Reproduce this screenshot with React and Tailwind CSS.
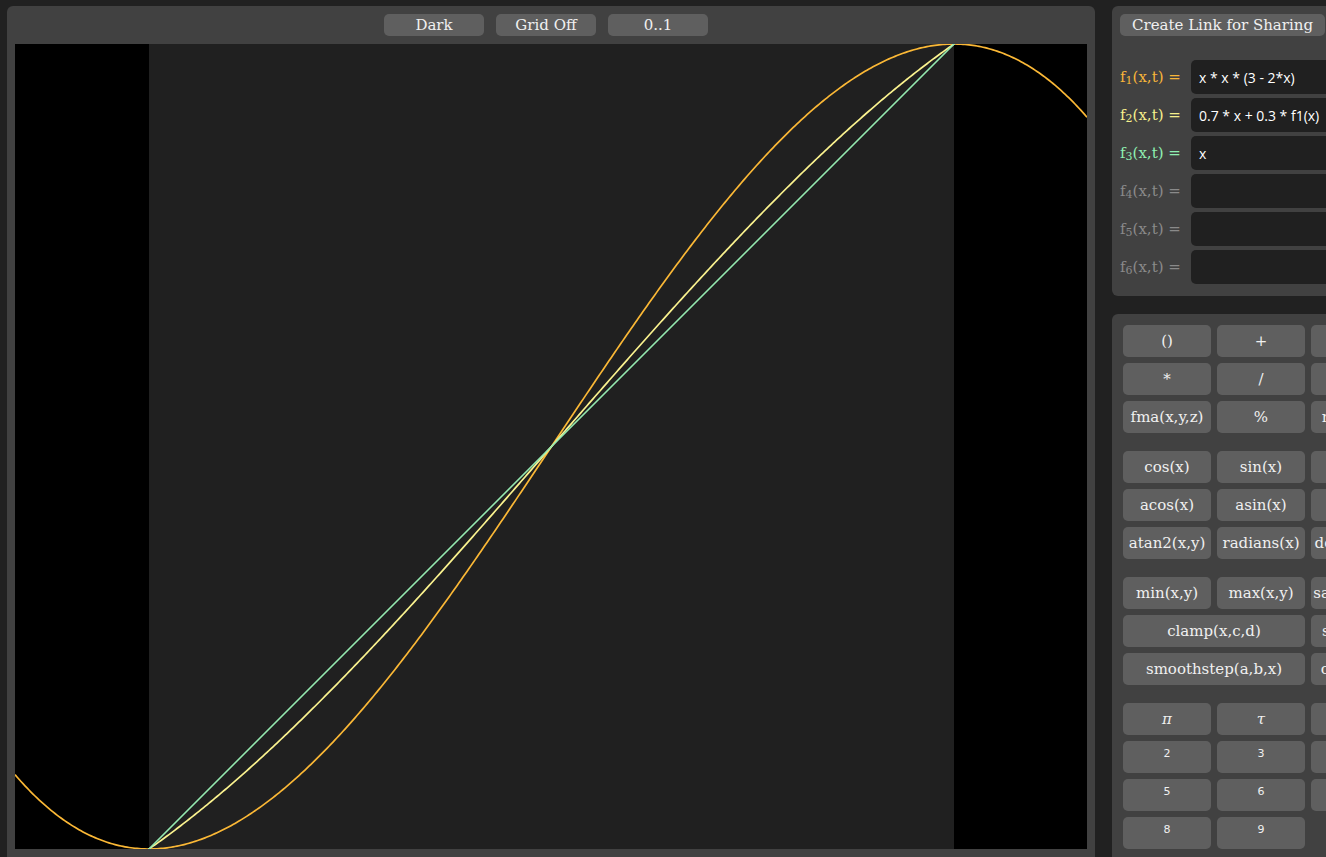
import React, { useMemo } from 'react';

const W = 1072;
const H = 805;
const OX = 134; // left edge of the unit square inside the canvas

const smooth = (x) => x * x * (3 - 2 * x);
const fns = [
  { color: '#fbb836', f: smooth },
  { color: '#fbf38f', f: (x) => 0.7 * x + 0.3 * smooth(x) },
  { color: '#94e9b0', f: (x) => x },
];

function buildPath(f) {
  let d = '';
  for (let px = 0; px <= W; px += 2) {
    const x = (px - OX) / H;
    const y = H - f(x) * H;
    d += (d ? ' L' : 'M') + px + ' ' + y.toFixed(2);
  }
  return d;
}

function Graph() {
  const paths = useMemo(() => fns.map((fn) => buildPath(fn.f)), []);
  return (
    <svg width={W} height={H} className="block bg-black">
      <rect x={OX} y={0} width={H} height={H} fill="#202020" />
      {paths.map((d, i) => (
        <path key={i} d={d} fill="none" stroke={fns[i].color} strokeWidth="1.7" />
      ))}
    </svg>
  );
}

const serif = { fontFamily: '"DejaVu Serif", serif' };

const funcs = [
  { color: 'text-[#f7b53a]', value: 'x * x * (3 - 2*x)' },
  { color: 'text-[#f6f08c]', value: '0.7 * x + 0.3 * f1(x)' },
  { color: 'text-[#8ff0b2]', value: 'x' },
  { color: 'text-[#8a8a8a]', value: '' },
  { color: 'text-[#8a8a8a]', value: '' },
  { color: 'text-[#8a8a8a]', value: '' },
];

const groups = [
  [['()'], ['+'], ['-'], ['*'], ['/'], ['^'], ['fma(x,y,z)'], ['%'], ['mod(x,y)']],
  [['cos(x)'], ['sin(x)'], ['tan(x)'], ['acos(x)'], ['asin(x)'], ['atan(x)'], ['atan2(x,y)'], ['radians(x)'], ['degrees(x)']],
  [['min(x,y)'], ['max(x,y)'], ['saturate(x)'], ['clamp(x,c,d)', 2], ['step(a,x)'], ['smoothstep(a,b,x)', 2], ['cosine(x)']],
  [['π', 1, 'italic'], ['τ', 1, 'italic'], ['e'], ['2', 1, 'sup'], ['3', 1, 'sup'], ['4', 1, 'sup'], ['5', 1, 'sup'], ['6', 1, 'sup'], ['7', 1, 'sup'], ['8', 1, 'sup'], ['9', 1, 'sup']],
];

function Key({ label, span, kind }) {
  return (
    <button
      className={
        'h-8 rounded-[5px] bg-[#5f5f5f] text-[#f0f0f0] whitespace-nowrap overflow-visible flex justify-center ' +
        (span === 2 ? 'col-span-2 ' : '') +
        (kind === 'sup' ? 'items-start pt-[7px] text-[11px] leading-none text-[#e0e0e0] ' : 'items-center text-[15px] ') +
        (kind === 'italic' ? 'italic ' : '')
      }
      style={kind === 'sup' ? { fontFamily: '"DejaVu Sans", sans-serif' } : serif}
    >
      {label}
    </button>
  );
}

export default function App() {
  return (
    <div className="h-screen w-full overflow-hidden bg-[#212121]">
      <div className="flex gap-[17px] pl-[7px] pt-[6px] w-[1500px]">
        <div className="w-[1088px] shrink-0 rounded-t-[6px] bg-[#414141] px-2 pt-2 pb-2">
          <div className="flex justify-center gap-3 pr-[10px] mb-2">
            {['Dark', 'Grid Off', '0..1'].map((t) => (
              <button
                key={t}
                className="h-[22px] w-[100px] rounded-[5px] bg-[#5f5f5f] text-[15px] leading-none text-[#f0f0f0]"
                style={serif}
              >
                {t}
              </button>
            ))}
          </div>
          <Graph />
        </div>

        <div className="w-[340px] shrink-0 flex flex-col gap-[18px]">
          <div className="rounded-[6px] bg-[#414141] pl-2 pt-2 pb-3">
            <button
              className="block h-[22px] rounded-[5px] bg-[#5f5f5f] px-3 text-[15px] leading-none text-[#f0f0f0] whitespace-nowrap"
              style={serif}
            >
              Create Link for Sharing
            </button>
            <div className="mt-6 flex flex-col gap-1">
              {funcs.map((fn, i) => (
                <div key={i} className="flex items-center h-[34px]">
                  <div className={'w-[71px] shrink-0 text-[15px] leading-none whitespace-nowrap ' + fn.color} style={serif}>
                    f<sub className="text-[11px]">{i + 1}</sub>(x,t) =
                  </div>
                  <div
                    className="h-[34px] flex-1 rounded-l-[5px] bg-[#202020] px-2 flex items-center text-[14px] text-white"
                    style={{ fontFamily: '"Open Sans", sans-serif' }}
                  >
                    {fn.value}
                  </div>
                </div>
              ))}
            </div>
          </div>

          <div className="rounded-[6px] bg-[#414141] p-[11px] flex flex-col gap-[18px] h-[600px]">
            {groups.map((g, gi) => (
              <div key={gi} className="grid grid-cols-[88px_88px_88px] gap-[6px]">
                {g.map(([label, span, kind], ki) => (
                  <Key key={ki} label={label} span={span} kind={kind} />
                ))}
              </div>
            ))}
          </div>
        </div>
      </div>
    </div>
  );
}
